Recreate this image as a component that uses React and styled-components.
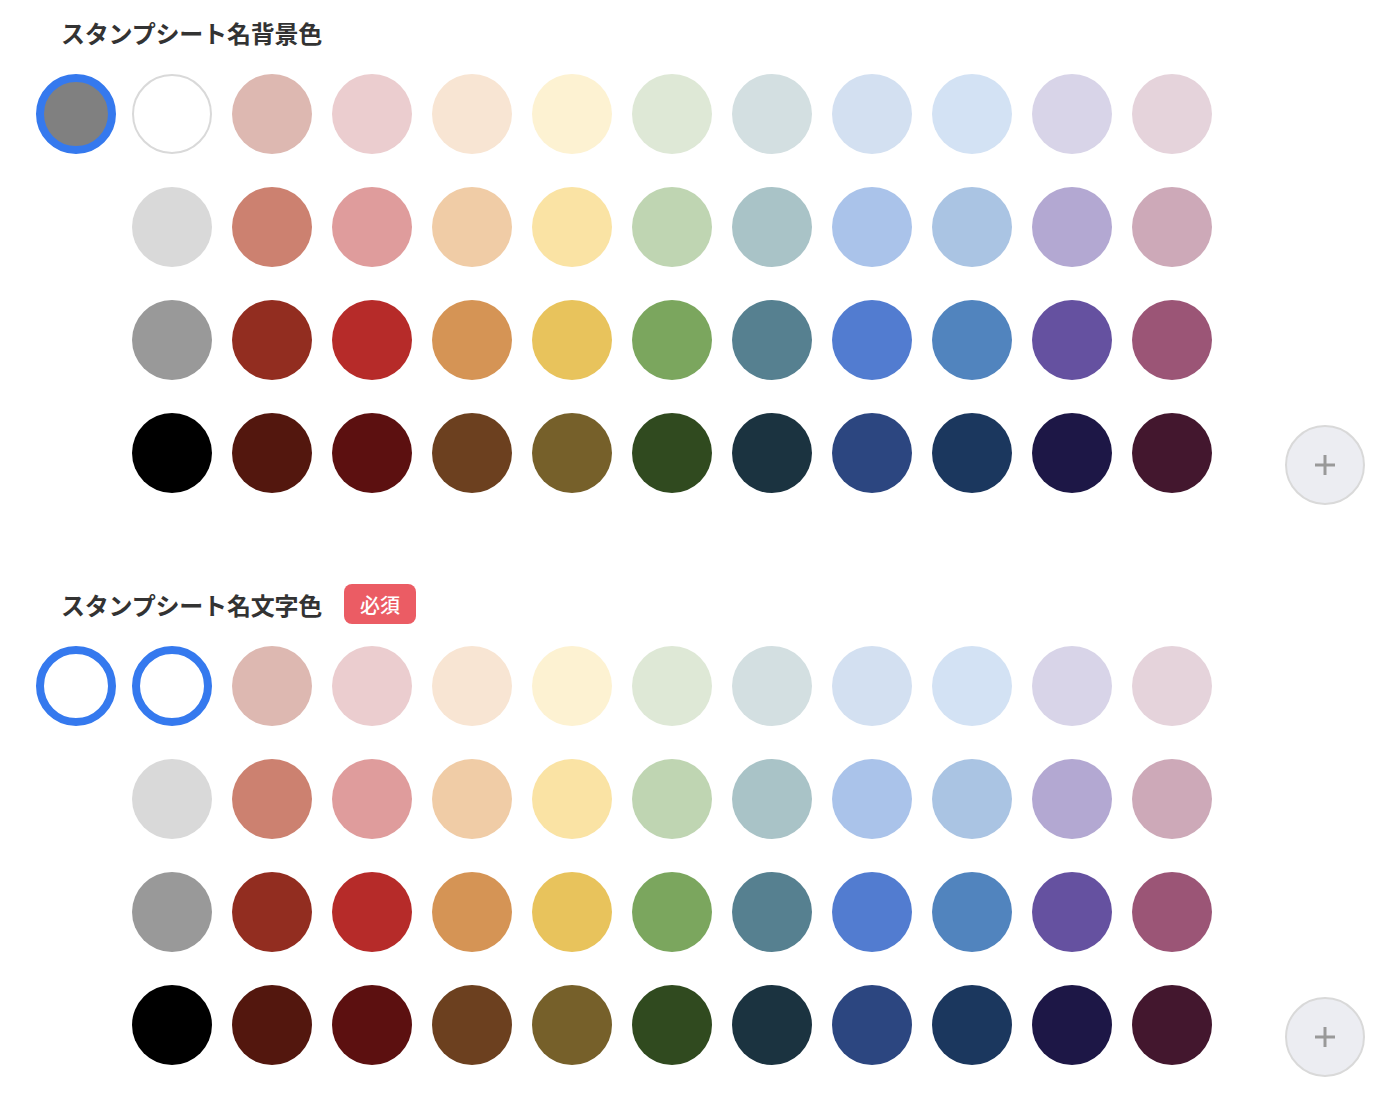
import React from "react"
import styled, { createGlobalStyle } from "styled-components"

const GlobalStyle = createGlobalStyle`
  body {
    margin: 0;
    background: #ffffff;
    font-family: "Noto Sans CJK JP", "Noto Sans", sans-serif;
  }
`

const Page = styled.div`
  display: flex;
  flex-direction: column;
  gap: 91px;
  padding: 12px 0 40px 36px;
`

const Section = styled.section`
  display: flex;
  flex-direction: column;
  gap: 22px;
`

const LabelRow = styled.div`
  display: flex;
  align-items: center;
  gap: 22px;
  height: 40px;
  padding-left: 25px;
`

const Label = styled.h2`
  margin: 0;
  font-size: 24px;
  font-weight: 700;
  color: #333333;
  letter-spacing: -0.2px;
`

const Badge = styled.span`
  display: inline-flex;
  align-items: center;
  justify-content: center;
  height: 40px;
  padding: 0 16px;
  border-radius: 8px;
  background: #eb5c64;
  color: #ffffff;
  font-size: 20px;
  font-weight: 500;
`

const PaletteRow = styled.div`
  display: flex;
  align-items: flex-end;
`

const CustomColumn = styled.div`
  display: flex;
  flex-direction: column;
  align-self: flex-start;
  margin-right: 16px;
`

const Grid = styled.div`
  display: grid;
  grid-template-columns: repeat(11, 80px);
  grid-auto-rows: 80px;
  column-gap: 20px;
  row-gap: 33px;
  margin-right: 73px;
`

const Swatch = styled.button`
  box-sizing: border-box;
  width: 80px;
  height: 80px;
  margin: 0;
  padding: 0;
  border-radius: 50%;
  background: ${p => p.$color};
  border: ${p =>
    p.$selected ? "8px solid #3579ee" : p.$outlined ? "2px solid #d9d9d9" : "none"};
  cursor: pointer;
`

const AddButton = styled.button`
  box-sizing: border-box;
  display: flex;
  align-items: center;
  justify-content: center;
  width: 80px;
  height: 80px;
  margin: 0 0 -12px;
  padding: 0;
  border-radius: 50%;
  border: 2px solid #d9d9d9;
  background: #ecedf2;
  cursor: pointer;
`

const presets = [
  "#ddb8b1", "#ebcdcf", "#f8e5d3", "#fdf2d2", "#dee8d6", "#d3dfe1", "#d3e0f1", "#d3e2f4", "#d8d4e8", "#e5d3db",
  "#d9d9d9", "#cc8170", "#df9c9c", "#f0cca6", "#fae3a4", "#bfd5b2", "#a9c3c7", "#aac3ea", "#aac4e3", "#b3a8d2", "#cda9b8",
  "#999999", "#922d20", "#b62b29", "#d59455", "#e8c35c", "#7ba65e", "#568090", "#527cd0", "#5184be", "#6551a0", "#9b5576",
  "#000000", "#53170e", "#5c1010", "#6c401f", "#76602a", "#304a1f", "#1b3340", "#2c4680", "#1b375e", "#1d1746", "#43172e",
]

const PlusIcon = () => (
  <svg width="22" height="22" viewBox="0 0 22 22">
    <path d="M11 1v20M1 11h20" stroke="#999999" strokeWidth="3" />
  </svg>
)

const Palette = ({ custom, white }) => (
  <PaletteRow>
    <CustomColumn>
      <Swatch $color={custom.color} $selected={custom.selected} />
    </CustomColumn>
    <Grid>
      <Swatch $color="#ffffff" $selected={white} $outlined={!white} />
      {presets.map((c, i) => (
        <Swatch key={i} $color={c} />
      ))}
    </Grid>
    <AddButton aria-label="追加">
      <PlusIcon />
    </AddButton>
  </PaletteRow>
)

export default function App() {
  return (
    <>
      <GlobalStyle />
      <Page>
        <Section>
          <LabelRow>
            <Label>スタンプシート名背景色</Label>
          </LabelRow>
          <Palette custom={{ color: "#808080", selected: true }} white={false} />
        </Section>
        <Section>
          <LabelRow>
            <Label>スタンプシート名文字色</Label>
            <Badge>必須</Badge>
          </LabelRow>
          <Palette custom={{ color: "#ffffff", selected: true }} white />
        </Section>
      </Page>
    </>
  )
}
